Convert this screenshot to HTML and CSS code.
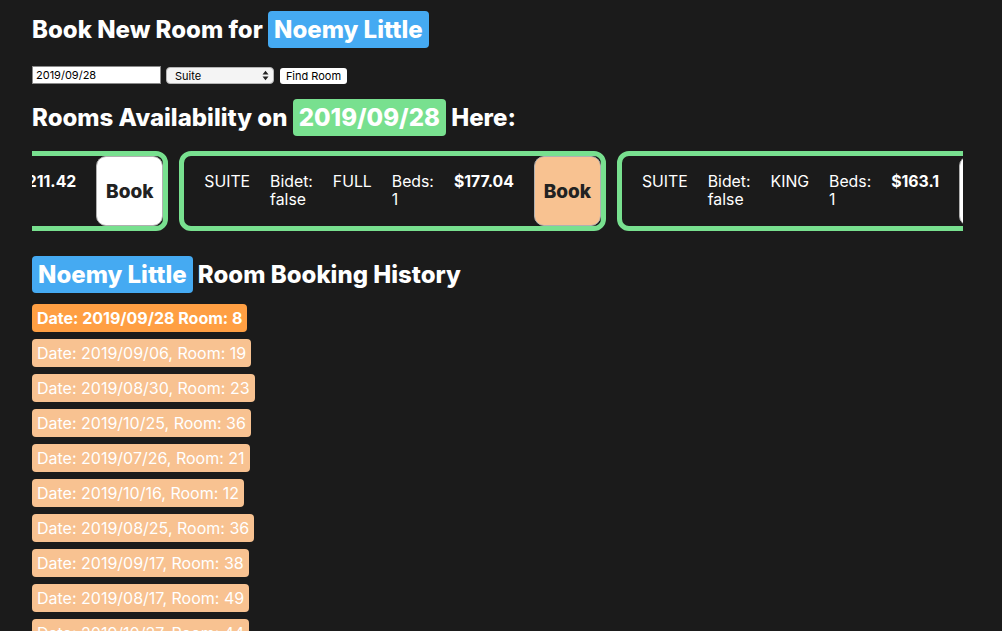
FILE: index.html
```html
<!DOCTYPE html>
<html lang="en">
<head>
<meta charset="utf-8">
<title>Book New Room</title>
<link rel="stylesheet" href="styles.css">
</head>
<body>
<div class="page">
  <h1 class="title">Book New Room for <span class="badge badge-blue">Noemy Little</span></h1>

  <form class="search">
    <input class="date-input" type="text" value="2019/09/28">
    <div class="select-wrap">
      <select class="type-select"><option>Suite</option><option>Double</option><option>Single</option></select>
      <svg class="select-arrows" width="7" height="11" viewBox="0 0 7 11"><path d="M0.5 4.5 L3.5 0.8 L6.5 4.5 Z M0.5 6.5 L3.5 10.2 L6.5 6.5 Z" fill="#222"/></svg>
    </div>
    <button class="find-btn" type="button">Find Room</button>
  </form>

  <h1 class="title">Rooms Availability on <span class="badge badge-green">2019/09/28</span> Here:</h1>

  <div class="rooms" id="rooms">
    <div class="room">
      <div class="room-info">
        <span class="room-field">SUITE</span>
        <span class="room-field">Bidet: true</span>
        <span class="room-field">QUEEN</span>
        <span class="room-field">Beds: 2</span>
        <span class="room-field room-price">$211.42</span>
      </div>
      <button class="book-btn" type="button">Book</button>
    </div>
    <div class="room">
      <div class="room-info">
        <span class="room-field">SUITE</span>
        <span class="room-field">Bidet: false</span>
        <span class="room-field">FULL</span>
        <span class="room-field">Beds: 1</span>
        <span class="room-field room-price">$177.04</span>
      </div>
      <button class="book-btn book-btn-active" type="button">Book</button>
    </div>
    <div class="room">
      <div class="room-info">
        <span class="room-field">SUITE</span>
        <span class="room-field">Bidet: false</span>
        <span class="room-field">KING</span>
        <span class="room-field">Beds: 1</span>
        <span class="room-field room-price">$163.1</span>
      </div>
      <button class="book-btn" type="button">Book</button>
    </div>
    <div class="room">
      <div class="room-info">
        <span class="room-field">SUITE</span>
        <span class="room-field">Bidet: true</span>
        <span class="room-field">TWIN</span>
        <span class="room-field">Beds: 2</span>
        <span class="room-field room-price">$298.5</span>
      </div>
      <button class="book-btn" type="button">Book</button>
    </div>
  </div>

  <h1 class="title"><span class="badge badge-blue">Noemy Little</span> Room Booking History</h1>

  <ul class="history">
    <li class="booking booking-current">Date: 2019/09/28 Room: 8</li>
    <li class="booking">Date: 2019/09/06, Room: 19</li>
    <li class="booking">Date: 2019/08/30, Room: 23</li>
    <li class="booking">Date: 2019/10/25, Room: 36</li>
    <li class="booking">Date: 2019/07/26, Room: 21</li>
    <li class="booking">Date: 2019/10/16, Room: 12</li>
    <li class="booking">Date: 2019/08/25, Room: 36</li>
    <li class="booking">Date: 2019/09/17, Room: 38</li>
    <li class="booking">Date: 2019/08/17, Room: 49</li>
    <li class="booking">Date: 2019/10/27, Room: 44</li>
    <li class="booking">Date: 2019/07/12, Room: 5</li>
  </ul>
</div>
<script src="script.js"></script>
</body>
</html>
```

FILE: styles.css
```css
html {
  scrollbar-width: none;
}

body {
  margin: 0;
  background: #1b1b1b;
  color: #fff;
  font-family: "Inter", "Noto Sans", sans-serif;
}

.page {
  padding: 11px 39px 0 32px;
}

.title {
  margin: 0;
  font-size: 24px;
  font-weight: 800;
  line-height: 37px;
  color: #fff;
  white-space: nowrap;
}

.badge {
  display: inline-block;
  padding: 0 6px;
  border-radius: 4px;
  line-height: 37px;
}

.badge-blue {
  background: #45aaf2;
}

.badge-green {
  background: #78e08f;
}

.search {
  display: flex;
  align-items: flex-end;
  margin: 18px 0 15px;
  height: 18px;
}

.date-input {
  box-sizing: border-box;
  width: 129px;
  height: 18px;
  margin: 0;
  padding: 0 3px;
  border: 1px solid #8a8a8a;
  border-radius: 0;
  background: #fff;
  color: #000;
  font: 11px "Inter", sans-serif;
}

.select-wrap {
  position: relative;
  margin-left: 5px;
}

.type-select {
  display: block;
  box-sizing: border-box;
  width: 108px;
  height: 17px;
  margin: 0;
  padding: 0 0 0 8px;
  border: 1px solid #b5b5b5;
  border-radius: 4px;
  background: #f4f4f4;
  color: #000;
  font: 11px "Inter", sans-serif;
  appearance: none;
  -webkit-appearance: none;
}

.select-arrows {
  position: absolute;
  right: 5px;
  top: 3px;
  pointer-events: none;
}

.find-btn {
  box-sizing: border-box;
  width: 67px;
  height: 16px;
  margin: 0 0 0 6px;
  padding: 0;
  border: none;
  border-radius: 3px;
  background: #fff;
  color: #000;
  font: 11px "Inter", sans-serif;
}

.rooms {
  display: flex;
  gap: 11px;
  margin: 15px 0 25px;
  overflow-x: auto;
  scrollbar-width: none;
}

.room {
  flex: none;
  display: flex;
  border: 5px solid #78e08f;
  border-radius: 12px;
}

.room-info {
  display: flex;
  align-self: center;
  align-items: flex-start;
  gap: 20px;
  padding: 0 20px;
  font-size: 15.8px;
  line-height: 18.5px;
}

.room-field {
  width: min-content;
}

.room-price {
  font-weight: 700;
  white-space: nowrap;
}

.book-btn {
  box-sizing: border-box;
  width: 67px;
  height: 70px;
  margin: 0;
  padding: 0;
  border: 1px solid #b0b0b0;
  border-radius: 10px;
  background: #fff;
  color: #222;
  font: 800 19px "Inter", sans-serif;
}

.book-btn-active {
  background: #f8c291;
}

.history {
  list-style: none;
  margin: 11px 0 0;
  padding: 0;
  display: flex;
  flex-direction: column;
  align-items: flex-start;
  gap: 7px;
}

.booking {
  padding: 4px 5px;
  border-radius: 4px;
  background: #f8c291;
  color: #fff;
  font-size: 16px;
  line-height: 20px;
}

.booking-current {
  background: #ff9f43;
  font-weight: 700;
}
```

FILE: script.js
```js
(function () {
  var rooms = document.getElementById('rooms');
  var second = rooms.children[1];
  rooms.scrollLeft += second.getBoundingClientRect().left - 179;
})();
```
